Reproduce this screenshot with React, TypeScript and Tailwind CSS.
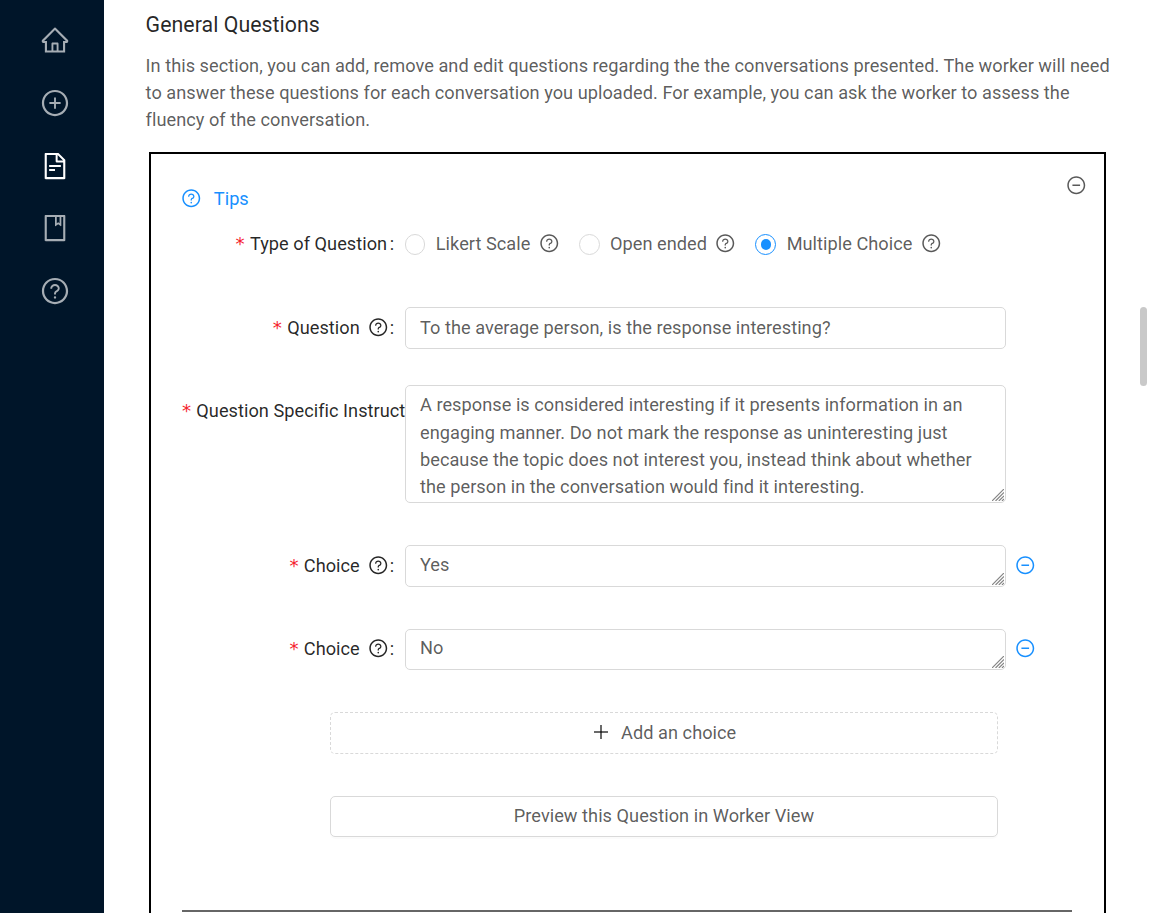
import type { ReactNode } from "react";
import {
  AiOutlineBook,
  AiOutlineFileText,
  AiOutlineHome,
  AiOutlineMinusCircle,
  AiOutlinePlusCircle,
  AiOutlineQuestionCircle,
} from "react-icons/ai";

function Help({ className = "" }: { className?: string }) {
  return <AiOutlineQuestionCircle className={`size-[20.5px] shrink-0 ${className}`} />;
}

function Sidebar() {
  return (
    <nav className="flex w-[104px] shrink-0 flex-col items-center gap-[32.7px] bg-[#001529] pt-[25px] pl-[6px] text-[30px] text-white/65">
      <AiOutlineHome />
      <AiOutlinePlusCircle />
      <AiOutlineFileText className="mt-[0.4px] -mb-[0.4px] text-white" />
      <AiOutlineBook />
      <AiOutlineQuestionCircle />
    </nav>
  );
}

function Asterisk() {
  return <span className="mr-[5.2px] font-['DejaVu_Sans'] text-[18.2px] leading-none text-[#f5222d]">*</span>;
}

function Label({ text, help = false }: { text: string; help?: boolean }) {
  return (
    <div className="flex h-[42px] w-[223px] shrink-0 items-center justify-end whitespace-nowrap text-black/85">
      <Asterisk />
      <span>{text}</span>
      {help && <Help className="-mt-px ml-[8.2px]" />}
      <span className={help ? "mr-[10.8px] ml-[1.3px]" : "mr-[10.8px] ml-[2.6px]"}>:</span>
    </div>
  );
}

function LongLabel({ text }: { text: string }) {
  return (
    <div className="mt-[5px] flex h-[42px] w-[223px] shrink-0 items-center whitespace-nowrap text-black/85">
      <Asterisk />
      <span>{text}</span>
    </div>
  );
}

function Field({ label, className, children }: { label: ReactNode; className: string; children: ReactNode }) {
  return (
    <div className={`flex items-start ${className}`}>
      {label}
      {children}
    </div>
  );
}

function TextBox({ value, className }: { value: string; className: string }) {
  return (
    <div className="relative w-[601px] shrink-0">
      <textarea
        defaultValue={value}
        className={`block w-full resize-none overflow-hidden rounded-[5px] border border-[#d9d9d9] bg-white px-[14px] leading-[27.3px] outline-none ${className}`}
      />
      <svg viewBox="0 0 12 12" className="absolute right-[2px] bottom-[2px] size-3 stroke-[#858585] stroke-[1.2]" fill="none">
        <path d="M0 12 12 0M3.5 12 12 3.5M6.8 12 12 6.8M10 12 12 10" />
      </svg>
    </div>
  );
}

function Radio({ text, checked = false, className = "" }: { text: string; checked?: boolean; className?: string }) {
  return (
    <label className={`flex items-center ${className}`}>
      <span
        className={`mt-px mr-[10.4px] flex size-[20.8px] items-center justify-center rounded-full border ${checked ? "border-[#1890ff]" : "border-[#d9d9d9]"}`}
      >
        {checked && <span className="size-[10.4px] rounded-full bg-[#1890ff]" />}
      </span>
      <span>{text}</span>
      <Help className="-mt-px ml-[8.3px]" />
    </label>
  );
}

export default function App() {
  return (
    <div className="flex h-[913px] w-[1150px] overflow-hidden bg-white font-[Roboto,sans-serif] text-[18.2px] leading-[27.3px] tracking-[0.03px] text-black/65">
      <Sidebar />
      <main className="flex w-[1036px] shrink-0 flex-col pr-[30px] pl-[41.6px]">
        <h2 className="mt-[9px] h-[31px] shrink-0 text-[21.35px] leading-[31px] font-normal text-black/85">General Questions</h2>
        <p className="mt-[12px] h-[82px] shrink-0 leading-[27px] tracking-[0.03px] whitespace-nowrap">
          In this section, you can add, remove and edit questions regarding the the conversations presented. The worker will need
          <br />
          to answer these questions for each conversation you uploaded. For example, you can ask the worker to assess the
          <br />
          fluency of the conversation.
        </p>
        <section className="mt-[18px] ml-[3.4px] flex h-[800px] w-[957px] shrink-0 flex-col border-2 border-black pl-[31px]">
          <div className="flex h-[69px] justify-between pr-[17.4px]">
            <div className="mt-[31px] flex h-[28px] items-center text-[#1890ff]">
              <Help className="-mt-px mr-[12.5px] -ml-[1.2px]" />
              Tips
            </div>
            <AiOutlineMinusCircle className="mt-[20.6px] size-[20.5px]" />
          </div>
          <Field label={<Label text="Type of Question" />} className="h-[84px]">
            <div className="-ml-[0.4px] flex h-[42px] items-center">
              <Radio text="Likert Scale" className="mr-[19.6px]" />
              <Radio text="Open ended" className="mr-[19.6px]" />
              <Radio text="Multiple Choice" checked />
            </div>
          </Field>
          <Field label={<Label text="Question" help />} className="h-[78px]">
            <input
              defaultValue="To the average person, is the response interesting?"
              className="h-[42px] w-[601px] rounded-[5px] border border-[#d9d9d9] bg-white px-[14px] pb-[2px] outline-none"
            />
          </Field>
          <Field label={<LongLabel text="Question Specific Instruct" />} className="h-[160px]">
            <TextBox
              value={
                "A response is considered interesting if it presents information in an\nengaging manner. Do not mark the response as uninteresting just\nbecause the topic does not interest you, instead think about whether\nthe person in the conversation would find it interesting."
              }
              className="h-[118px] pt-[5.4px]"
            />
          </Field>
          <Field label={<Label text="Choice" help />} className="h-[84px]">
            <TextBox value="Yes" className="h-[42px] pt-[5px]" />
            <AiOutlineMinusCircle className="mt-[9.6px] ml-[8.8px] size-[20.5px] text-[#1890ff]" />
          </Field>
          <Field label={<Label text="Choice" help />} className="-mt-px h-[84px]">
            <div className="mt-px">
              <TextBox value="No" className="h-[41px] pt-[4px]" />
            </div>
            <AiOutlineMinusCircle className="mt-[9.6px] ml-[8.8px] size-[20.5px] text-[#1890ff]" />
          </Field>
          <button className="ml-[148px] flex h-[42px] w-[668px] shrink-0 items-center justify-center rounded-[5px] border border-dashed border-[#d9d9d9] bg-white pl-[2px]">
            <svg viewBox="0 0 14 14" className="mr-[13.4px] mb-[2px] size-[14px] stroke-black/65 stroke-[1.8]" fill="none">
              <path d="M7 0V14" />
              <path d="M0 7H14" />
            </svg>
            Add an choice
          </button>
          <button className="mt-[42px] ml-[148px] h-[41px] w-[668px] shrink-0 rounded-[5px] border border-[#d9d9d9] bg-white pb-[2px] shadow-[0_2px_0_rgba(0,0,0,0.016)]">
            Preview this Question in Worker View
          </button>
          <div className="mt-[73px] h-[2px] w-[890px] shrink-0 bg-[#666]" />
        </section>
      </main>
      <div className="mt-[307px] h-[79px] w-[7px] shrink-0 rounded-full bg-[#c9c9c9]" />
    </div>
  );
}
